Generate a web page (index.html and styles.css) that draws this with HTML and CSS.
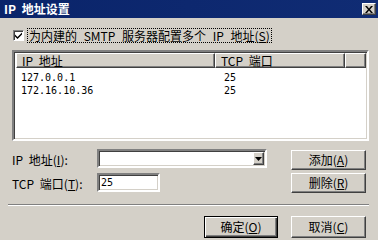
FILE: index.html
```html
<!DOCTYPE html>
<html>
<head lang="zh-CN">
    <meta charset="UTF-8">
    <title>IP 地址设置</title>
    <link rel="stylesheet" href="styles.css">
</head>
<body>
    <section class="dialog">
        <header class="titlebar">
            <span class="title">IP 地址设置</span>
            <a href="javascript:void(0);" class="close">
                <svg width="8" height="7" viewBox="0 0 8 7"><path d="M0 0h2l2 2.5L6 0h2L5 3.5 8 7H6L4 4.5 2 7H0l3-3.5z" fill="#000"/></svg>
            </a>
        </header>
        <div class="content">
            <label class="check-row">
                <span class="checkbox">
                    <svg width="7" height="7" viewBox="0 0 7 7"><path d="M0 2.5l2.5 2.5L7 0.5v2L2.5 7 0 4.5z" fill="#000"/></svg>
                </span>
                <span class="check-text">为内建的 SMTP 服务器配置多个 IP 地址(<u>S</u>)</span>
            </label>
            <div class="listview">
                <div class="list-head">
                    <span class="col col-ip">IP 地址</span>
                    <span class="col col-port">TCP 端口</span>
                    <span class="col col-rest"></span>
                </div>
                <ul class="list-body">
                    <li><span class="col-ip">127.0.0.1</span><span class="col-port">25</span></li>
                    <li><span class="col-ip">172.16.10.36</span><span class="col-port">25</span></li>
                </ul>
            </div>
            <div class="form">
                <div class="fields">
                    <div class="field-row">
                        <span class="field-label">IP 地址(<u>I</u>):</span>
                        <span class="combo">
                            <span class="combo-btn">
                                <svg width="7" height="4" viewBox="0 0 7 4"><path d="M0 0h7L3.5 4z" fill="#000"/></svg>
                            </span>
                        </span>
                    </div>
                    <div class="field-row">
                        <span class="field-label">TCP 端口(<u>T</u>):</span>
                        <span class="textbox">25</span>
                    </div>
                </div>
                <div class="side-btns">
                    <a href="javascript:void(0);" class="btn">添加(<u>A</u>)</a>
                    <a href="javascript:void(0);" class="btn">删除(<u>R</u>)</a>
                </div>
            </div>
            <div class="separator"></div>
            <div class="footer">
                <a href="javascript:void(0);" class="btn btn-default">确定(<u>O</u>)</a>
                <a href="javascript:void(0);" class="btn">取消(<u>C</u>)</a>
            </div>
        </div>
    </section>
</body>
</html>
```

FILE: styles.css
```css
body{
    margin: 0;
    font-family: "Noto Sans CJK SC", "Liberation Sans", sans-serif;
    font-size: 12px;
    color: #000000;
}
ul{
    margin: 0;
    padding: 0;
    list-style-type: none;
}
a{
    text-decoration: none;
    color: #000000;
}
u{
    text-decoration: underline;
}
.dialog{
    width: 378px;
    height: 240px;
    background-color: #d4d0c8;
    overflow: hidden;
}
.titlebar{
    height: 18px;
    display: flex;
    align-items: center;
    justify-content: space-between;
    padding: 0 2px 0 4px;
    background: linear-gradient(to right, #0a246a, #102c74);
}
.title{
    color: #ffffff;
    font-weight: bold;
    font-size: 12px;
    line-height: 14px;
    word-spacing: 3px;
}
.close{
    width: 12px;
    height: 10px;
    display: flex;
    align-items: center;
    justify-content: center;
    background-color: #d4d0c8;
    border: 1px solid;
    border-color: #ffffff #404040 #404040 #ffffff;
    box-shadow: inset -1px -1px #808080;
}
.content{
    padding: 10px 11px 0 12px;
}
.check-row{
    height: 15px;
    display: flex;
    align-items: center;
    margin-bottom: 7px;
}
.checkbox{
    width: 9px;
    height: 9px;
    margin-left: 1px;
    background-color: #ffffff;
    border: 1px solid;
    border-color: #808080 #ffffff #ffffff #808080;
    box-shadow: inset 1px 1px #404040;
    display: flex;
    align-items: center;
    justify-content: center;
}
.check-text{
    margin-left: 4px;
    padding: 0 1px;
    line-height: 13px;
    outline: 1px dotted #000000;
    word-spacing: 4px;
}
.listview{
    width: 351px;
    height: 85px;
    background-color: #ffffff;
    border: 2px solid;
    border-color: #808080 #ffffff #ffffff #808080;
    box-shadow: inset 1px 1px #404040, inset -1px -1px #d4d0c8;
    padding: 2px 0 0 2px;
    box-sizing: content-box;
}
.list-head{
    display: flex;
    height: 15px;
    margin-top: -1px;
}
.col{
    height: 13px;
    line-height: 13px;
    padding-left: 5px;
    background-color: #d4d0c8;
    border: 1px solid;
    border-color: #ffffff #404040 #404040 #ffffff;
    box-shadow: inset -1px -1px #808080;
    word-spacing: 3px;
    box-sizing: content-box;
}
.list-head .col-ip{
    width: 192px;
}
.list-head .col-port{
    width: 123px;
}
.list-head .col-rest{
    flex: 1;
    margin-right: 1px;
}
.list-body{
    padding-top: 3px;
    font-family: "DejaVu Sans Mono", "Liberation Mono", monospace;
    font-size: 10px;
}
.list-body li{
    display: flex;
    height: 13px;
    line-height: 13px;
}
.list-body .col-ip{
    width: 199px;
    padding-left: 5px;
}
.list-body .col-port{
    padding-left: 4px;
}
.form{
    display: flex;
    margin-top: 8px;
}
.fields{
    width: 279px;
}
.field-row{
    display: flex;
    align-items: center;
    height: 20px;
    margin-bottom: 4px;
}
.field-label{
    width: 85px;
    word-spacing: 3px;
}
.combo, .textbox{
    height: 15px;
    background-color: #ffffff;
    border: 2px solid;
    border-color: #808080 #ffffff #ffffff #808080;
    box-shadow: inset 1px 1px #404040, inset -1px -1px #d4d0c8;
    box-sizing: content-box;
    margin-top: -1px;
}
.combo{
    width: 166px;
    display: flex;
    justify-content: flex-end;
}
.combo-btn{
    width: 11px;
    height: 13px;
    margin: 1px 1px 0 0;
    display: flex;
    align-items: center;
    justify-content: center;
    background-color: #d4d0c8;
    border: 1px solid;
    border-color: #ffffff #404040 #404040 #ffffff;
    box-shadow: inset -1px -1px #808080;
    box-sizing: border-box;
}
.textbox{
    width: 57px;
    padding-left: 2px;
    line-height: 15px;
    font-family: "DejaVu Sans Mono", "Liberation Mono", monospace;
    font-size: 10px;
}
.side-btns{
    display: flex;
    flex-direction: column;
    gap: 3px;
    margin-top: 1px;
}
.btn{
    display: block;
    width: 75px;
    height: 20px;
    line-height: 18px;
    text-align: center;
    background-color: #d4d0c8;
    border: 1px solid;
    border-color: #ffffff #404040 #404040 #ffffff;
    box-shadow: inset -1px -1px #808080;
    box-sizing: border-box;
}
.separator{
    margin: 7px -2px 0 -4px;
    border-top: 1px solid #808080;
    border-bottom: 1px solid #ffffff;
    height: 0;
}
.footer{
    display: flex;
    justify-content: flex-end;
    gap: 13px;
    margin-top: 10px;
    padding-right: 1px;
}
.footer .btn{
    height: 22px;
    line-height: 20px;
}
.btn-default{
    width: 74px;
    border: 1px solid #000000;
    box-shadow: inset 1px 1px #ffffff, inset -1px -1px #404040, inset -2px -2px #808080;
}
```
